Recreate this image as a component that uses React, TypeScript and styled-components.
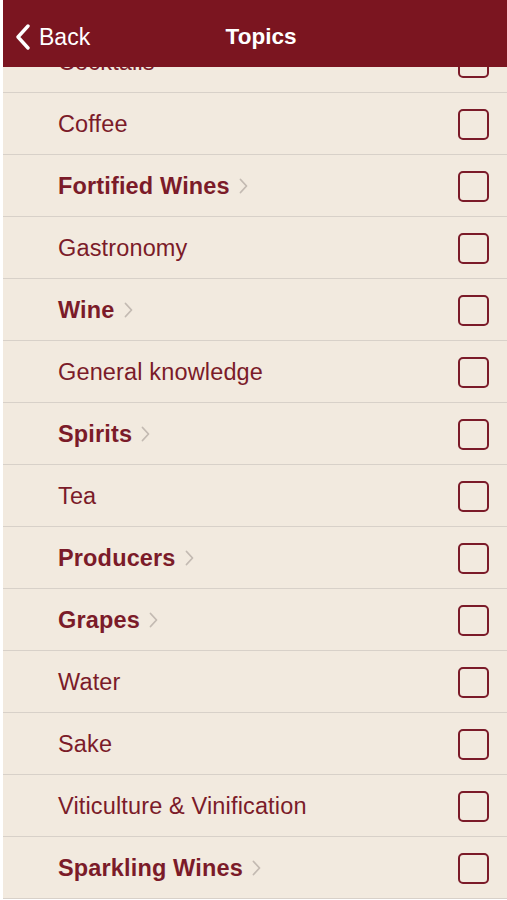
import styled, { createGlobalStyle } from 'styled-components';

const GlobalStyle = createGlobalStyle`
  html, body {
    margin: 0;
    padding: 0;
    background: #ffffff;
  }
  body {
    font-family: "Liberation Sans", Arial, sans-serif;
  }
`;

type Topic = {
  name: string;
  group?: boolean;
};

const topics: Topic[] = [
  { name: 'Cocktails' },
  { name: 'Coffee' },
  { name: 'Fortified Wines', group: true },
  { name: 'Gastronomy' },
  { name: 'Wine', group: true },
  { name: 'General knowledge' },
  { name: 'Spirits', group: true },
  { name: 'Tea' },
  { name: 'Producers', group: true },
  { name: 'Grapes', group: true },
  { name: 'Water' },
  { name: 'Sake' },
  { name: 'Viticulture & Vinification' },
  { name: 'Sparkling Wines', group: true },
];

const Screen = styled.div`
  position: relative;
  margin-left: 3px;
  height: 899px;
  overflow: hidden;
  background: #f2eadf;
`;

// nav bar sits over the scrolled list
const NavBar = styled.header`
  position: absolute;
  top: 0;
  left: 0;
  right: 0;
  z-index: 2;
  height: 67px;
  box-sizing: border-box;
  padding-top: 7px;
  display: grid;
  grid-template-columns: 1fr auto 1fr;
  align-items: center;
  background: #7b1520;
  color: #ffffff;
`;

const BackButton = styled.button`
  justify-self: start;
  display: flex;
  align-items: center;
  gap: 8px;
  padding: 0 0 0 12px;
  border: none;
  background: none;
  color: #ffffff;
  font-family: "Liberation Sans", Arial, sans-serif;
  font-size: 23px;
  cursor: pointer;
`;

const Title = styled.h1`
  margin: 0 0 0 12px;
  font-size: 22.5px;
  font-weight: 700;
`;

const List = styled.ul`
  list-style: none;
  margin: 0;
  padding: 31px 0 0;
`;

const Row = styled.li`
  display: flex;
  align-items: center;
  box-sizing: border-box;
  height: 62px;
  padding: 1px 18px 0 55px;
  border-bottom: 1px solid #d8d1c9;
`;

const Label = styled.span<{ $group?: boolean }>`
  display: flex;
  align-items: center;
  gap: 9px;
  flex: 1;
  color: #7b1b29;
  font-size: 23.5px;
  letter-spacing: 0.15px;
  font-weight: ${(p) => (p.$group ? 700 : 400)};
`;

const Box = styled.span`
  width: 27px;
  height: 27px;
  border: 2px solid #7b1b29;
  border-radius: 5px;
`;

const Chevron = () => (
  <svg width="9" height="16" viewBox="0 0 9 16">
    <polyline points="1.5,1.5 7.5,8 1.5,14.5" fill="none" stroke="#c3bab2" strokeWidth="1.8" strokeLinecap="round" strokeLinejoin="round" />
  </svg>
);

const BackArrow = () => (
  <svg width="16" height="26" viewBox="0 0 16 26">
    <polyline points="13,2 3,13 13,24" fill="none" stroke="#ffffff" strokeWidth="3.4" strokeLinecap="round" strokeLinejoin="round" />
  </svg>
);

export default function App() {
  return (
    <>
      <GlobalStyle />
      <Screen>
        <NavBar>
          <BackButton>
            <BackArrow />
            Back
          </BackButton>
          <Title>Topics</Title>
          <span />
        </NavBar>
        <List>
          {topics.map((t) => (
            <Row key={t.name}>
              <Label $group={t.group}>
                {t.name}
                {t.group && <Chevron />}
              </Label>
              <Box />
            </Row>
          ))}
        </List>
      </Screen>
    </>
  );
}
